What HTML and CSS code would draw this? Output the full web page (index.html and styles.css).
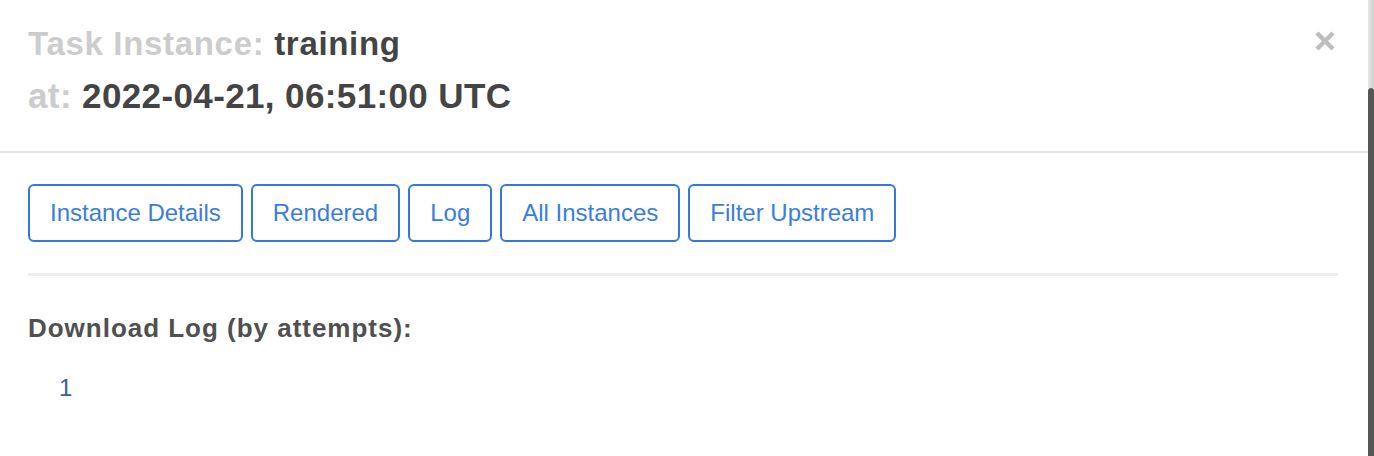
FILE: index.html
```html
<!DOCTYPE html>
<html>
<head>
<meta charset="utf-8">
<link rel="stylesheet" href="styles.css">
</head>
<body>
<div class="page">
  <div class="modal">
    <div class="modal-header">
      <div class="title">
        <div class="line1"><span class="label">Task Instance: </span><span class="value">training</span></div>
        <div class="line2"><span class="label">at: </span><span class="value">2022-04-21, 06:51:00 UTC</span></div>
      </div>
      <button class="close" aria-label="Close">
        <svg width="22" height="22" viewBox="0 0 22 22"><path d="M3 3 L19 19 M19 3 L3 19" stroke="#bdbdbd" stroke-width="4.5" stroke-linecap="butt"/></svg>
      </button>
    </div>
    <div class="modal-body">
      <div class="btn-row">
        <a class="btn">Instance Details</a>
        <a class="btn">Rendered</a>
        <a class="btn">Log</a>
        <a class="btn">All Instances</a>
        <a class="btn">Filter Upstream</a>
      </div>
      <div class="rule"></div>
      <div class="dl-title">Download Log (by attempts):</div>
      <ul class="attempts">
        <li><a class="attempt">1</a></li>
      </ul>
    </div>
  </div>
  <div class="scrollbar">
    <div class="track"></div>
    <div class="thumb"></div>
  </div>
</div>
</body>
</html>
```

FILE: styles.css
```css
html, body {
  margin: 0;
  padding: 0;
  background: #fff;
}
body {
  font-family: "Liberation Sans", Arial, Helvetica, sans-serif;
  color: #4d4d4d;
}
.page {
  display: flex;
  height: 456px;
  overflow: hidden;
}
.modal {
  flex: 1;
  background: #fff;
}
.modal-header {
  display: flex;
  justify-content: space-between;
  align-items: flex-start;
  padding: 24px 32px 35px 28px;
  border-bottom: 2px solid #e5e5e5;
}
.title {
  font-weight: bold;
}
.line1 {
  font-size: 33px;
  line-height: 40px;
  letter-spacing: 0.68px;
}
.line2 {
  font-size: 35px;
  line-height: 40px;
  letter-spacing: 0.38px;
  margin-top: 12px;
}
.label {
  color: #cccccc;
}
.value {
  color: #444;
}
.close {
  background: none;
  border: 0;
  padding: 0;
  margin-top: 6px;
  cursor: pointer;
  display: flex;
}
.modal-body {
  padding: 31px 30px 0 28px;
}
.btn-row {
  display: flex;
  gap: 8px;
}
.btn {
  display: block;
  border: 2px solid #3279dc;
  border-radius: 6px;
  padding: 10px 20px;
  font-size: 24px;
  line-height: 34px;
  color: #3a7ddf;
  white-space: nowrap;
}
.rule {
  margin-top: 31px;
  height: 3px;
  background: #eeeeee;
}
.dl-title {
  margin-top: 37px;
  font-size: 26px;
  line-height: 30px;
  font-weight: bold;
  letter-spacing: 0.98px;
  color: #505050;
}
.attempts {
  list-style: none;
  margin: 28px 0 0 0;
  padding: 0 0 0 31px;
}
.attempt {
  font-size: 24px;
  line-height: 34px;
  color: #3d5f8b;
}
.scrollbar {
  width: 6px;
  display: flex;
  flex-direction: column;
}
.track {
  height: 88px;
  background: linear-gradient(to right, #e6e6e6, #cfcfcf);
}
.thumb {
  flex: 1;
  background: #565656;
  border-radius: 3px 3px 0 0;
}
```
